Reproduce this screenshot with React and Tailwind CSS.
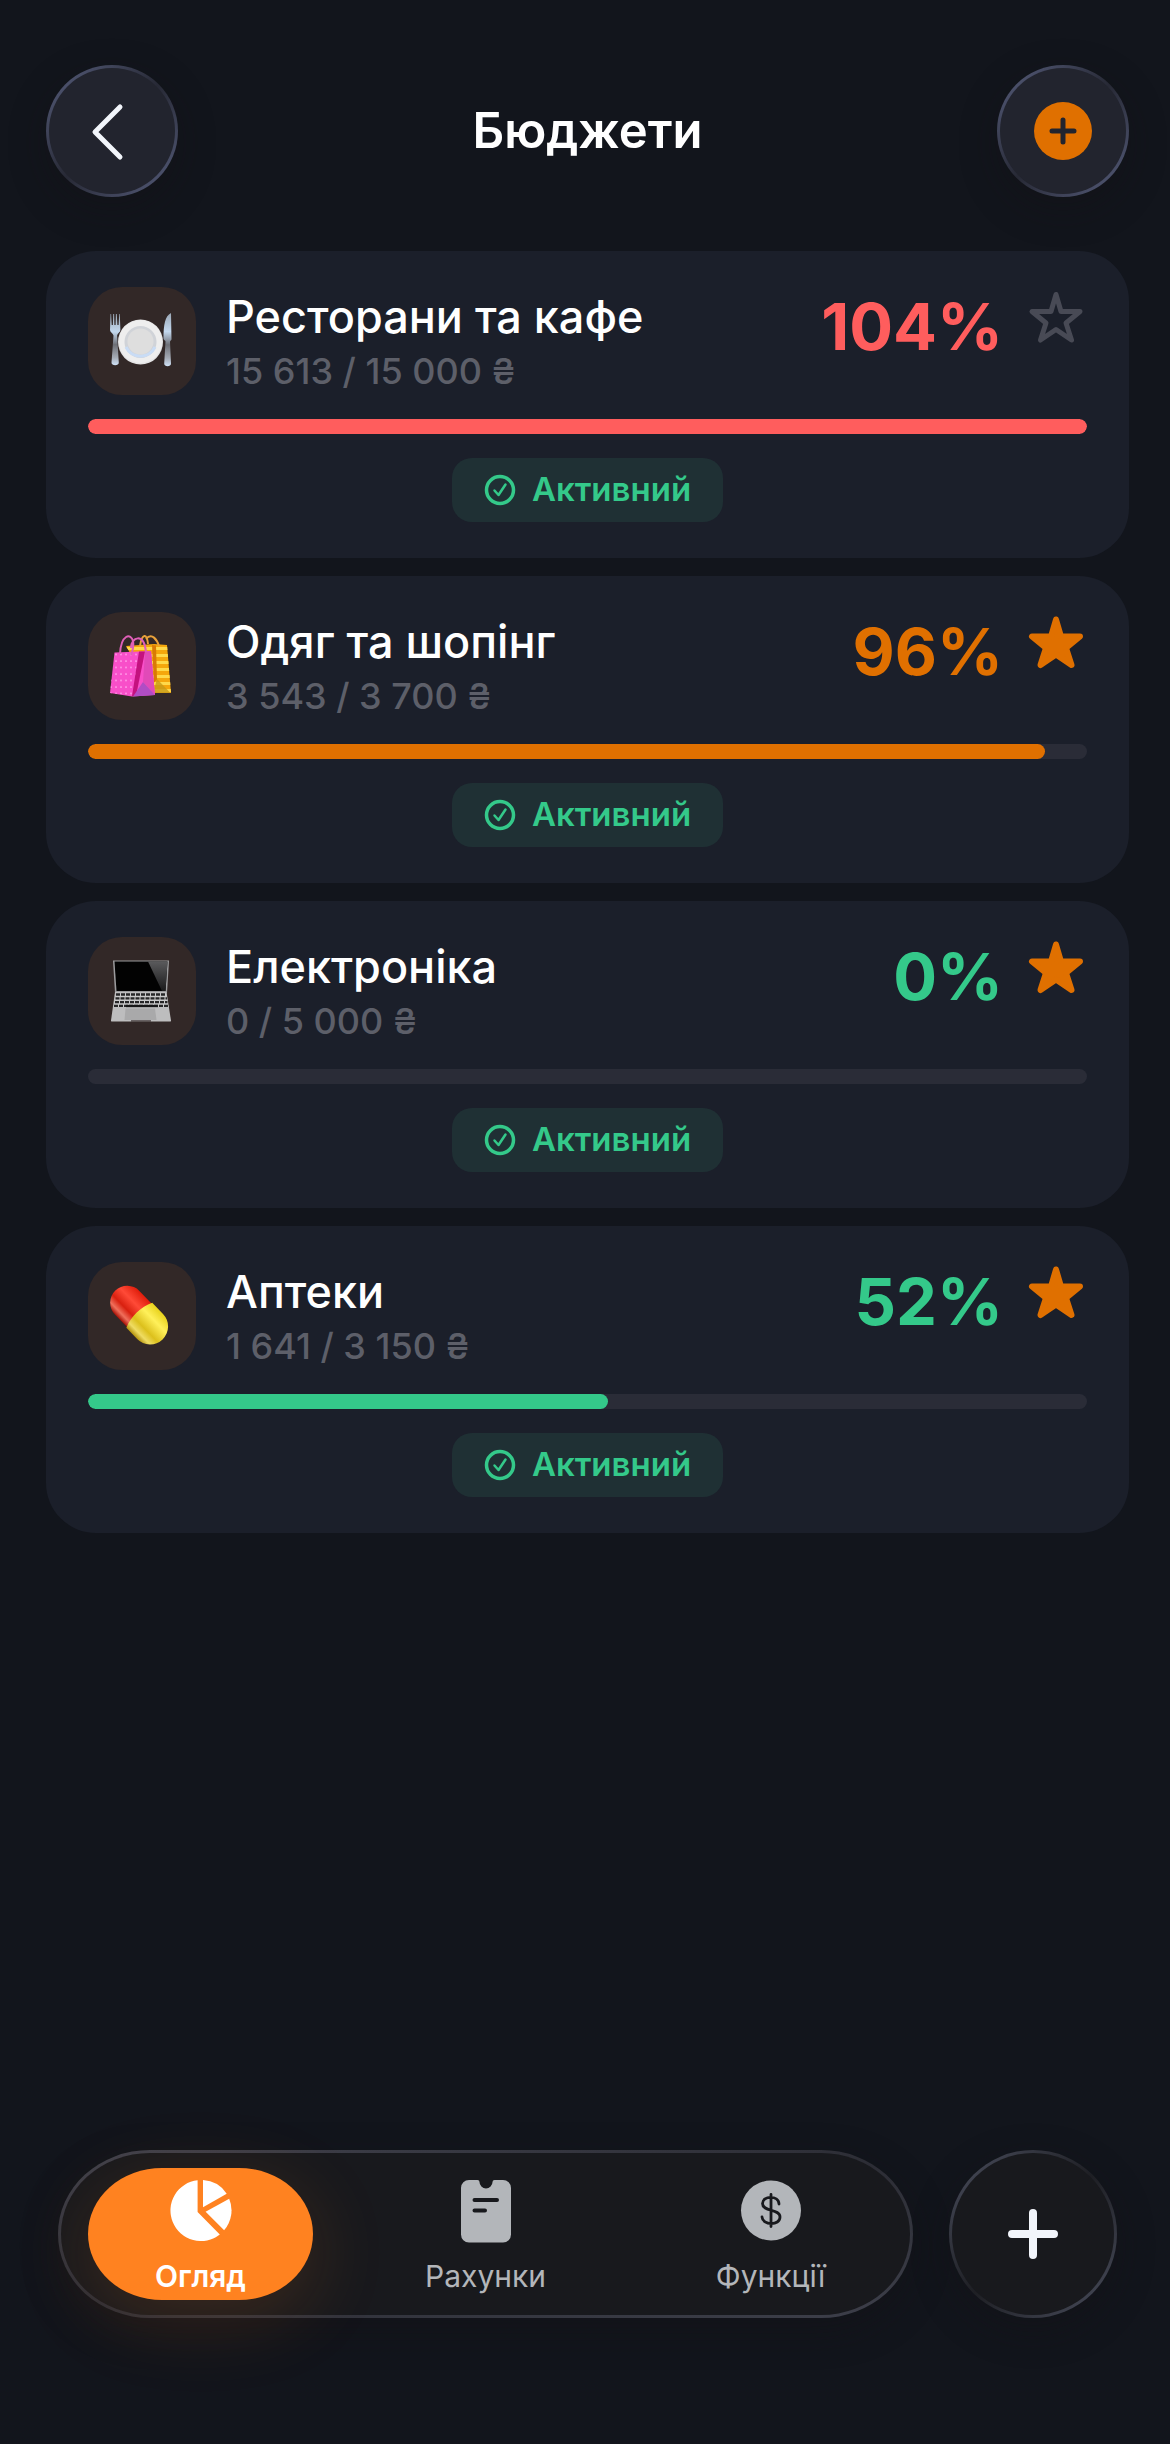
const budgets = [
  { id: 'food', name: 'Ресторани та кафе', amount: '15 613 / 15 000 ₴', spent: 15613, limit: 15000, percent: 104, tone: 'red', starred: false, Icon: PlateIcon },
  { id: 'shopping', name: 'Одяг та шопінг', amount: '3 543 / 3 700 ₴', spent: 3543, limit: 3700, percent: 96, tone: 'orange', starred: true, Icon: BagsIcon },
  { id: 'tech', name: 'Електроніка', amount: '0 / 5 000 ₴', spent: 0, limit: 5000, percent: 0, tone: 'green', starred: true, Icon: LaptopIcon },
  { id: 'pharmacy', name: 'Аптеки', amount: '1 641 / 3 150 ₴', spent: 1641, limit: 3150, percent: 52, tone: 'green', starred: true, Icon: PillIcon },
];

const textTone = {
  red: 'text-[#ff5d5d]',
  orange: 'text-[#e07000]',
  green: 'text-[#34c98a]',
};

const barTone = {
  red: 'bg-[#ff5d5d]',
  orange: 'bg-[#e07000]',
  green: 'bg-[#34c98a]',
};

function PlateIcon() {
  return (
    <svg viewBox="0 0 64 64" className="size-16" aria-hidden="true">
      <defs>
        <linearGradient id="steel" x1="0" y1="0" x2="0" y2="1">
          <stop offset="0" stopColor="#9aa7b5" />
          <stop offset="0.35" stopColor="#c3d8ee" />
          <stop offset="0.6" stopColor="#6d6f76" />
          <stop offset="0.85" stopColor="#a5abb5" />
          <stop offset="1" stopColor="#cfe2f7" />
        </linearGradient>
      </defs>
      <g transform="translate(-1 0)">
        <path d="M1.5 5l.6 0 .6 11h1.2l.3-11h.9l.3 11h1.2l.3-11h.9l.6 11h1.2l.6-11h.6l.6 16c0 2-3 3.500-3.300 5.500L9.800 53.500c.3 3.500-7.600 3.500-7.300 0L4.500 26.500C4 24.500 1 23 1 21z" fill="url(#steel)" />
        <path d="M62 4c-6 3-7.500 12-7.500 25.500 0 1.500 2 2 2 3l-1.300 22c-.2 3.500 7 3.500 6.800 0L61 32.500l1.500-2z" fill="url(#steel)" />
        <circle cx="31.500" cy="33" r="22.500" fill="#e4e4e5" />
        <circle cx="31.500" cy="32.500" r="21.500" fill="#eeeeee" />
        <circle cx="31.500" cy="33" r="16" fill="#d0d3d8" />
        <path d="M17 38a16 16 0 0 0 29 0" fill="none" stroke="#c9dcf5" strokeWidth="3" />
        <circle cx="31.500" cy="32.500" r="13" fill="#dedede" />
      </g>
    </svg>
  );
}

function BagsIcon() {
  return (
    <svg viewBox="0 0 64 64" className="size-16" aria-hidden="true">
      <defs>
        <pattern id="dots" width="5" height="6.500" patternUnits="userSpaceOnUse">
          <circle cx="2" cy="2" r="0.900" fill="#ffa6ec" />
        </pattern>
        <pattern id="stripes" width="8" height="7" patternUnits="userSpaceOnUse">
          <rect width="8" height="3" fill="#ffd94a" />
        </pattern>
      </defs>
      <g transform="translate(-1 -1)">
        <path d="M17 13l28-2 13 1 4 48H44z" fill="#f5a70c" />
        <path d="M17 13l28-2 13 1 4 48H44z" fill="url(#stripes)" />
        <path d="M43 12l4 .5 1 34-3 3z" fill="#d97a05" />
        <path d="M48 46l13.500 14H44z" fill="#c79a18" opacity="0.8" />
        <path d="M31 13C33 0 38 0 39 11M37 6c6-7 11 1 13 7" fill="none" stroke="#e9a13a" strokeWidth="2" />
        <path d="M5.500 19.500L42 18l4 44-23 1.500L1 60z" fill="#f84fc9" />
        <path d="M5.500 19.500L31 18.500 25 63 1 60z" fill="url(#dots)" />
        <path d="M30 18.500h6l-9 44.500-4 0z" fill="#c4127f" />
        <path d="M36 18.500l6-.5 4 44-12-13z" fill="#e14ab8" />
        <path d="M34 49l12 13-22 1.500z" fill="#b04dc4" />
        <path d="M11 21C12 1 22 0 24 8c1 5 0 9-2 14M22 15c0-11 13-16 15 4" fill="none" stroke="#df5fb7" strokeWidth="2" />
      </g>
    </svg>
  );
}

function LaptopIcon() {
  return (
    <svg viewBox="0 0 64 64" className="size-16" aria-hidden="true">
      <defs>
        <linearGradient id="glare" x1="0" y1="0" x2="0" y2="1">
          <stop offset="0" stopColor="#5a5a5c" />
          <stop offset="1" stopColor="#1a1a1b" />
        </linearGradient>
      </defs>
      <g transform="translate(-1 0)">
        <path d="M4 1.500h56l-2 33H6z" fill="#9b9b9d" />
        <path d="M5.500 2.500h53L56.500 32h-49z" fill="#020202" />
        <path d="M39 2.500h19.500L56.500 32H53z" fill="url(#glare)" />
        <path d="M6 33h51.500L62 61.500c0 1-.5 1-1 1H3c-.5 0-1 0-1-1z" fill="#bdbdbe" />
        <path d="M7 34.500h50L59.500 48h-55z" fill="#c9c9ca" />
        <g stroke="#262627" strokeWidth="2.300" strokeDasharray="4 1">
          <path d="M7 35.500h50M6.500 39.300h51.500M6 43.100h52.500M5 46.900h54" />
        </g>
        <path d="M17 47h32" stroke="#161617" strokeWidth="2.300" />
        <path d="M16.500 49.500h29.500l1.500 11.500H15.500z" fill="#a9a9aa" />
        <path d="M22 62h20" stroke="#4c4444" strokeWidth="1.500" />
      </g>
    </svg>
  );
}

function PillIcon() {
  return (
    <svg viewBox="0 0 64 64" className="size-16" aria-hidden="true">
      <defs>
        <linearGradient id="pillRed" x1="0" y1="0" x2="0" y2="1">
          <stop offset="0" stopColor="#e01d0b" />
          <stop offset="0.350" stopColor="#ff4a37" />
          <stop offset="0.650" stopColor="#d8200f" />
          <stop offset="0.850" stopColor="#f0705c" />
          <stop offset="1" stopColor="#a51005" />
        </linearGradient>
        <linearGradient id="pillYellow" x1="0" y1="0" x2="0" y2="1">
          <stop offset="0" stopColor="#e8d21c" />
          <stop offset="0.300" stopColor="#fff05a" />
          <stop offset="0.650" stopColor="#dcc01c" />
          <stop offset="0.850" stopColor="#efdc63" />
          <stop offset="1" stopColor="#b4930d" />
        </linearGradient>
      </defs>
      <g transform="translate(-2 0) rotate(46 32 32)">
        <path d="M32 15H13.500a17 17 0 0 0 0 34H32z" fill="url(#pillRed)" />
        <path d="M31 14h15.500a18 18 0 0 1 0 36H31c-5-11-5-25 0-36z" fill="url(#pillYellow)" />
      </g>
    </svg>
  );
}

function StarIcon({ filled }) {
  return (
    <svg viewBox="0 0 60 60" className="size-15" aria-hidden="true">
      <path
        d="M29 7.500L34 24.500H53L39 36L44.500 53L29 42.500L13.500 53L19 36L5 24.500H24Z"
        fill={filled ? '#e07000' : 'none'}
        stroke={filled ? '#e07000' : '#484a55'}
        strokeWidth={filled ? 6 : 5}
        strokeLinejoin="round"
      />
    </svg>
  );
}

function CheckIcon() {
  return (
    <svg viewBox="0 0 32 32" fill="none" stroke="currentColor" className="size-8" aria-hidden="true">
      <circle cx="16" cy="16" r="13.500" strokeWidth="3.500" />
      <path d="M10.500 16.500l4 4.500 7-10.500" strokeWidth="2.500" strokeLinecap="round" strokeLinejoin="round" />
    </svg>
  );
}

function OverviewIcon() {
  return (
    <svg viewBox="0 0 64 64" fill="#fff" className="size-16" aria-hidden="true">
      <path d="M28.600 .2V32L50.800 54.500A30.500 30.500 0 1 1 28.600 .2z" />
      <path d="M34 .1A30.500 30.500 0 0 1 57.700 13.700L34 27.300z" />
      <path d="M60.200 18.700A30.500 30.500 0 0 1 55.100 50.300L36.600 31.700z" />
    </svg>
  );
}

function AccountsIcon() {
  return (
    <svg viewBox="0 0 64 64" className="size-16" aria-hidden="true">
      <path d="M15 0h8.500a2 2 0 0 1 2 2 6.500 6.500 0 0 0 13 0 2 2 0 0 1 2-2H49a8 8 0 0 1 8 8V54.500a8 8 0 0 1-8 8H15a8 8 0 0 1-8-8V8a8 8 0 0 1 8-8z" fill="#b3b6ba" />
      <path d="M20.500 20h22.500M20.500 30.500h10.500" stroke="#18191d" strokeWidth="4" strokeLinecap="round" />
    </svg>
  );
}

function FeaturesIcon() {
  return (
    <svg viewBox="0 0 64 64" className="size-16" aria-hidden="true">
      <circle cx="32" cy="30.500" r="30" fill="#b3b6ba" />
      <path d="M32 14.500v32M40 24c-.5-9-16.500-8.500-16.500-.5 0 8.500 17.500 5 17.500 13.500 0 9-17.500 8.500-18 0" fill="none" stroke="#18191d" strokeWidth="2.800" strokeLinecap="round" />
    </svg>
  );
}

function RoundButton({ label, children }) {
  return (
    <button
      type="button"
      aria-label={label}
      className="size-33 rounded-full bg-linear-135 from-[#596080] via-[#272935] to-[#596080] p-[3px] shadow-[0_12px_36px_rgba(20,18,20,0.35)]"
    >
      <span className="flex size-full items-center justify-center rounded-full bg-[#22242e]">{children}</span>
    </button>
  );
}

function BudgetCard({ budget }) {
  const { name, amount, spent, limit, percent, tone, starred, Icon } = budget;
  const fill = Math.min((spent / limit) * 100, 100);

  return (
    <li className="flex flex-col gap-6 rounded-[50px] bg-[#1b1f2a] px-[42px] py-9">
      <div className="flex h-27 items-start">
        <div className="flex size-27 shrink-0 items-center justify-center rounded-[34px] bg-[#322827]">
          <Icon />
        </div>
        <div className="ml-[30px] flex-1 pt-[3px]">
          <h2 className="text-[45px] leading-[54px] font-medium text-white">{name}</h2>
          <p className="text-[36px] leading-[54px] font-medium text-[#5d5f69]">{amount}</p>
        </div>
        <span className={`pt-1 text-[65px] leading-[72px] font-bold ${textTone[tone]}`}>{percent}%</span>
        <button type="button" aria-label="Обране" aria-pressed={starred} className="ml-6">
          <StarIcon filled={starred} />
        </button>
      </div>
      <div
        role="progressbar"
        aria-label={name}
        aria-valuenow={Math.min(percent, 100)}
        className="h-[15px] overflow-hidden rounded-full bg-[#2a2c37]"
      >
        <div className={`h-full rounded-full ${barTone[tone]}`} style={{ width: `${fill}%` }} />
      </div>
      <div className="flex h-16 items-center gap-4 self-center rounded-[20px] bg-[#1f3034] px-8 text-[33px] font-semibold text-[#34c98a]">
        <CheckIcon />
        Активний
      </div>
    </li>
  );
}

function TabBar() {
  return (
    <nav className="mt-auto flex items-center gap-9 px-3">
      <div className="flex-1 rounded-[92px/84px] bg-linear-[170deg] from-[#41424d] via-[#2c2d35] to-[#3d3f4a] p-[3px] shadow-[0_12px_36px_rgba(20,18,20,0.35)]">
        <div className="flex h-[162px] items-center justify-between rounded-[89px/81px] bg-[#18191d] px-[27px] text-[30px] leading-9 text-[#b3b6ba]">
          <a href="#overview" aria-current="page" className="flex h-33 w-[225px] flex-col items-center gap-[14px] rounded-[74px/66px] bg-[#ff8220] pt-3 font-semibold text-white shadow-[0_18px_80px_rgba(255,130,32,0.16)]">
            <OverviewIcon />
            Огляд
          </a>
          <a href="#accounts" className="flex h-33 w-[225px] flex-col items-center gap-[14px] pt-3">
            <AccountsIcon />
            Рахунки
          </a>
          <a href="#features" className="flex h-33 w-[225px] flex-col items-center gap-[14px] pt-3">
            <FeaturesIcon />
            Функції
          </a>
        </div>
      </div>
      <button
        type="button"
        aria-label="Додати"
        className="size-42 rounded-full bg-linear-135 from-[#4c5060] via-[#1e1f24] to-[#4c5060] p-[3px] shadow-[0_12px_36px_rgba(20,18,20,0.35)]"
      >
        <span className="flex size-full items-center justify-center rounded-full bg-[#18191d]">
          <svg viewBox="0 0 50 50" stroke="#f2f5fb" strokeWidth="8" strokeLinecap="round" className="size-[50px]" aria-hidden="true">
            <path d="M25 4v42M4 25h42" />
          </svg>
        </span>
      </button>
    </nav>
  );
}

export default function App() {
  return (
    <div className="flex min-h-screen flex-col bg-[#12151c] pt-[65px] pr-[41px] pb-[126px] pl-[46px] font-['Inter',sans-serif]">
      <header className="flex items-center justify-between">
        <RoundButton label="Назад">
          <svg viewBox="0 0 60 60" fill="none" stroke="#f2f5fb" strokeWidth="5" strokeLinecap="round" strokeLinejoin="round" className="size-15" aria-hidden="true">
            <path d="M38 6L13 31L38 56" />
          </svg>
        </RoundButton>
        <h1 className="text-[49px] leading-[60px] font-semibold text-white">Бюджети</h1>
        <RoundButton label="Новий бюджет">
          <svg viewBox="0 0 58 58" className="size-[58px]" aria-hidden="true">
            <circle cx="29" cy="29" r="29" fill="#e07000" />
            <path d="M29 18v22M18 29h22" stroke="#22242e" strokeWidth="5" strokeLinecap="round" />
          </svg>
        </RoundButton>
      </header>

      <main className="mt-[54px]">
        <ul className="flex flex-col gap-[18px]">
          {budgets.map((budget) => (
            <BudgetCard key={budget.id} budget={budget} />
          ))}
        </ul>
      </main>

      <TabBar />
    </div>
  );
}
